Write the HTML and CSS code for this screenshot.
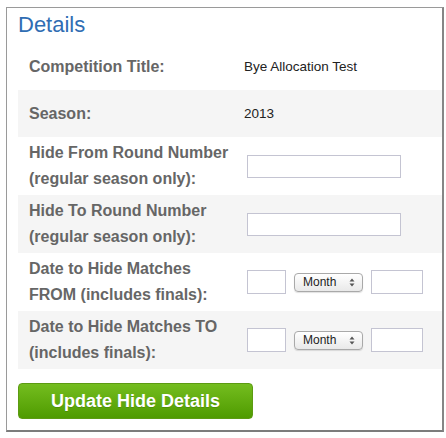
FILE: index.html
```html
<!DOCTYPE html>
<html>
<head>
<meta charset="utf-8">
<link rel="stylesheet" href="styles.css">
</head>
<body>
<div class="panel">
  <h2 class="title">Details</h2>
  <div class="rows">
    <div class="row">
      <div class="label">Competition Title:</div>
      <div class="value">Bye Allocation Test</div>
    </div>
    <div class="row alt">
      <div class="label">Season:</div>
      <div class="value">2013</div>
    </div>
    <div class="row tall">
      <div class="label">Hide From Round Number<br>(regular season only):</div>
      <div class="value"><input class="txt" type="text"></div>
    </div>
    <div class="row tall alt">
      <div class="label">Hide To Round Number<br>(regular season only):</div>
      <div class="value"><input class="txt" type="text"></div>
    </div>
    <div class="row tall">
      <div class="label">Date to Hide Matches<br>FROM (includes finals):</div>
      <div class="value date">
        <input class="day" type="text">
        <span class="select">Month<svg width="6" height="9" viewBox="0 0 6 9"><path d="M3 0.5 L5.5 3.5 H0.5 Z M3 8.5 L5.5 5.5 H0.5 Z" fill="#555"/></svg></span>
        <input class="year" type="text">
      </div>
    </div>
    <div class="row tall alt">
      <div class="label">Date to Hide Matches TO<br>(includes finals):</div>
      <div class="value date">
        <input class="day" type="text">
        <span class="select">Month<svg width="6" height="9" viewBox="0 0 6 9"><path d="M3 0.5 L5.5 3.5 H0.5 Z M3 8.5 L5.5 5.5 H0.5 Z" fill="#555"/></svg></span>
        <input class="year" type="text">
      </div>
    </div>
  </div>
  <button class="btn" type="button">Update Hide Details</button>
</div>
</body>
</html>
```
FILE: styles.css
```css
html, body {
  margin: 0;
  padding: 0;
  background: #fff;
}
body {
  font-family: "Liberation Sans", Arial, sans-serif;
}
.panel {
  margin: 7px 0 0 6px;
  width: 438px;
  height: 425px;
  box-sizing: border-box;
  border: 1px solid #9a9a9a;
  border-right: 2px solid #868686;
  border-bottom: 2px solid #7c7c7c;
  padding: 0 0 0 11px;
}
.title {
  margin: 0 0 5px 0;
  padding: 4px 0 0 0;
  font-size: 22px;
  line-height: 26px;
  font-weight: normal;
  color: #2f6db3;
}
.row {
  display: flex;
  align-items: center;
  padding: 3px 0;
  min-height: 41px;
  background: #fff;
}
.row.alt {
  background: #f5f5f5;
}
.label {
  width: 215px;
  padding-left: 11px;
  font-size: 16px;
  font-weight: bold;
  line-height: 26px;
  color: #666;
}
.value {
  font-size: 13.5px;
  color: #222;
}
.txt {
  display: block;
  margin: 0 0 0 3px;
  width: 154px;
  height: 23px;
  box-sizing: border-box;
  border: 1px solid #c4c4d2;
  background: #fff;
}
.date {
  display: flex;
  align-items: center;
  gap: 8px;
  margin-left: 3px;
}
.day, .year {
  margin: 0;
  height: 24px;
  box-sizing: border-box;
  border: 1px solid #c4c4d2;
  background: #fff;
}
.day { width: 39px; }
.year { width: 52px; }
.select {
  display: inline-flex;
  align-items: center;
  justify-content: space-between;
  width: 69px;
  height: 19px;
  box-sizing: border-box;
  padding: 0 7px 0 8px;
  border: 1px solid #a9a9a9;
  border-radius: 4px;
  background: linear-gradient(#ffffff, #e9e9e9);
  box-shadow: 0 1px 1px rgba(0, 0, 0, 0.12);
  font-size: 12px;
  color: #222;
}
.btn {
  display: block;
  margin-top: 14px;
  width: 235px;
  height: 36px;
  border: 1px solid #5c9b12;
  border-radius: 4px;
  background: linear-gradient(#74bd1f, #4f9b00);
  color: #fff;
  font-family: "Liberation Sans", Arial, sans-serif;
  font-size: 18px;
  font-weight: bold;
  text-shadow: 0 1px 0 rgba(0, 0, 0, 0.15);
  padding: 0;
}
```
